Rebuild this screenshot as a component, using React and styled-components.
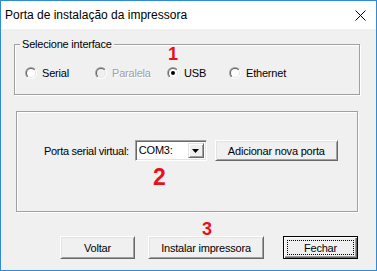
import React, { useId } from 'react';
import styled, { createGlobalStyle } from 'styled-components';

const Global = createGlobalStyle`
  html, body {
    margin: 0;
    padding: 0;
    background: #f0f0f0;
  }
  * {
    box-sizing: border-box;
  }
`;

const Window = styled.div`
  position: relative;
  width: 377px;
  height: 271px;
  border: 1px solid #2f8ad8;
  background: #f0f0f0;
  display: flex;
  flex-direction: column;
  font-family: "Liberation Sans", Arial, sans-serif;
  font-size: 11px;
  letter-spacing: -0.2px;
  color: #000;
  overflow: hidden;
`;

const TitleBar = styled.div`
  height: 28px;
  flex: none;
  background: #fff;
  display: flex;
  align-items: center;
  justify-content: space-between;
  padding: 0 10px 0 4px;
  font-size: 12px;
  letter-spacing: 0;
`;

const Body = styled.div`
  flex: 1;
  display: flex;
  flex-direction: column;
  align-items: flex-start;
  padding-top: 15px;
`;

const Group = styled.div`
  position: relative;
  width: ${(p) => p.$w}px;
  height: ${(p) => p.$h}px;
  margin-left: ${(p) => p.$left}px;
  margin-top: ${(p) => p.$top || 0}px;
  border: 1px solid #a0a0a0;
  box-shadow: inset 1px 1px #fff, 1px 1px #fff;
  padding: ${(p) => p.$pad};
`;

const Legend = styled.span`
  position: absolute;
  top: -7px;
  left: 5px;
  padding: 0 2px;
  line-height: 13px;
  background: #f0f0f0;
`;

const RadioRow = styled.div`
  display: grid;
  grid-template-columns: 70px 72px 62px auto;
  align-items: center;
  height: 12px;
`;

const RadioItem = styled.label`
  display: flex;
  align-items: center;
  gap: 5px;
  color: ${(p) => (p.$disabled ? '#a0a0a0' : '#000')};
  text-shadow: ${(p) => (p.$disabled ? '1px 1px #fff' : 'none')};
  white-space: nowrap;
`;

const PortRow = styled.div`
  display: flex;
  align-items: center;
  height: 21px;
`;

const FieldLabel = styled.span`
  margin-right: 6px;
  white-space: nowrap;
  letter-spacing: -0.3px;
`;

const Combo = styled.div`
  width: 72px;
  height: 21px;
  display: flex;
  align-items: stretch;
  background: #fff;
  border: 1px solid;
  border-color: #a0a0a0 #fff #fff #a0a0a0;
  box-shadow: inset 1px 1px #696969, inset -1px -1px #e3e3e3;
  padding: 2px;
  margin-right: 8px;
`;

const ComboText = styled.span`
  flex: 1;
  padding-left: 1px;
  line-height: 15px;
`;

const ComboButton = styled.span`
  width: 16px;
  display: flex;
  align-items: center;
  justify-content: center;
  background: #f0f0f0;
  border: 1px solid;
  border-color: #e3e3e3 #696969 #696969 #e3e3e3;
  box-shadow: inset 1px 1px #fff, inset -1px -1px #a0a0a0;
`;

const Button = styled.button`
  position: relative;
  width: ${(p) => p.$w}px;
  height: ${(p) => p.$h || 23}px;
  font-family: inherit;
  font-size: 11px;
  letter-spacing: inherit;
  color: #000;
  background: #f0f0f0;
  padding: 0;
  border: 1px solid;
  border-color: ${(p) => (p.$default ? '#000' : '#fff #696969 #696969 #fff')};
  box-shadow: ${(p) =>
    p.$default
      ? 'inset 1px 1px #fff, inset -1px -1px #696969, inset -2px -2px #a0a0a0'
      : 'inset 1px 1px #e3e3e3, inset -1px -1px #a0a0a0'};
`;

const Focus = styled.span`
  position: absolute;
  inset: 3px;
  border: 1px dotted #000;
  display: flex;
  align-items: center;
  justify-content: center;
`;

const ButtonRow = styled.div`
  display: flex;
  margin-top: 24px;
  padding-left: 59px;
  gap: 13px;
  & > :last-child {
    margin-left: 6px;
  }
`;

const Mark = styled.span`
  position: absolute;
  left: ${(p) => p.$x}px;
  top: ${(p) => p.$y}px;
  font-family: "Liberation Sans", Arial, sans-serif;
  font-weight: bold;
  font-size: ${(p) => p.$size}px;
  line-height: ${(p) => p.$size}px;
  letter-spacing: 0;
  color: #e8101a;
`;

const Radio = ({ checked, disabled }) => {
  const id = useId().replace(/:/g, '');
  return (
    <svg width="12" height="12" viewBox="0 0 12 12">
      <defs>
        <linearGradient id={`o${id}`} x1="0" y1="0" x2="1" y2="1">
          <stop offset="0.5" stopColor="#a0a0a0" />
          <stop offset="0.5" stopColor="#ffffff" />
        </linearGradient>
        <linearGradient id={`i${id}`} x1="0" y1="0" x2="1" y2="1">
          <stop offset="0.5" stopColor="#696969" />
          <stop offset="0.5" stopColor="#e3e3e3" />
        </linearGradient>
      </defs>
      <circle cx="6" cy="6" r="6" fill={`url(#o${id})`} />
      <circle cx="6" cy="6" r="5" fill={`url(#i${id})`} />
      <circle cx="6" cy="6" r="4" fill={disabled ? '#f0f0f0' : '#fff'} />
      {checked && <circle cx="6" cy="6" r="2" fill="#000" />}
    </svg>
  );
};

const Close = () => (
  <svg width="11" height="11" viewBox="0 0 11 11">
    <path d="M0.5 0.5 L10.5 10.5 M10.5 0.5 L0.5 10.5" stroke="#000" strokeWidth="1" />
  </svg>
);

const Arrow = () => (
  <svg width="7" height="4" viewBox="0 0 7 4">
    <path d="M0 0 H7 L3.5 4 Z" fill="#000" />
  </svg>
);

export default function App() {
  return (
    <>
      <Global />
      <Window>
        <TitleBar>
          <span>Porta de instalação da impressora</span>
          <Close />
        </TitleBar>
        <Body>
          <Group $w={346} $h={51} $left={13} $pad="22px 0 0 10px">
            <Legend>Selecione interface</Legend>
            <RadioRow>
              <RadioItem>
                <Radio />
                Serial
              </RadioItem>
              <RadioItem $disabled>
                <Radio disabled />
                Paralela
              </RadioItem>
              <RadioItem>
                <Radio checked />
                USB
              </RadioItem>
              <RadioItem>
                <Radio />
                Ethernet
              </RadioItem>
            </RadioRow>
          </Group>
          <Group $w={342} $h={101} $left={15} $top={16} $pad="28px 0 0 27px">
            <PortRow>
              <FieldLabel>Porta serial virtual:</FieldLabel>
              <Combo>
                <ComboText>COM3:</ComboText>
                <ComboButton>
                  <Arrow />
                </ComboButton>
              </Combo>
              <Button $w={123} $h={21}>Adicionar nova porta</Button>
            </PortRow>
          </Group>
          <ButtonRow>
            <Button $w={75}>Voltar</Button>
            <Button $w={116}>Instalar impressora</Button>
            <Button $w={75} $default>
              <Focus>Fechar</Focus>
            </Button>
          </ButtonRow>
        </Body>
        <Mark $x={167} $y={44} $size={18}>1</Mark>
        <Mark $x={152} $y={165} $size={23}>2</Mark>
        <Mark $x={201} $y={219} $size={18}>3</Mark>
      </Window>
    </>
  );
}
